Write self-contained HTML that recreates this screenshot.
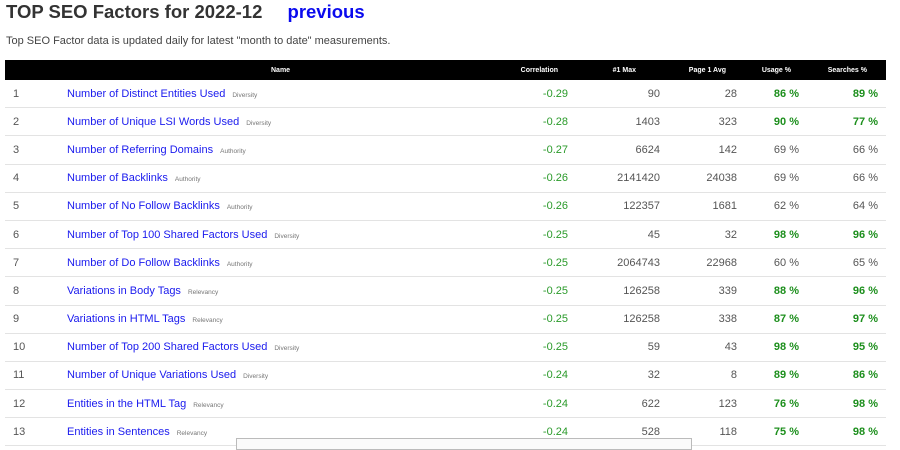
<!DOCTYPE html>
<html><head><meta charset="utf-8"><style>
body{margin:0;background:#fff;font-family:"Liberation Sans",Arial,sans-serif;width:900px;height:443px;overflow:hidden;position:relative}
h1{position:absolute;left:6px;top:0;margin:0;font-size:18.5px;line-height:23px;color:#333;font-weight:bold}
h1 a{color:#0a0aee;text-decoration:none;margin-left:20px}
p{position:absolute;left:6px;top:35px;margin:0;font-size:11px;color:#444}
table{position:absolute;left:5px;top:60px;width:881px;border-collapse:collapse;table-layout:fixed}
th{background:#000;color:#fff;font-size:7px;height:20px;padding:0;text-align:right}
td{height:27.2px;padding:0;border-bottom:1px solid #e3e3e3;font-size:11px;color:#555;text-align:right}
td.n{text-align:left;padding-left:8px}
td.nm{text-align:left;padding-left:5px}
td.nm a{color:#1a1aee;text-decoration:none;font-size:11px}
td.nm small{font-size:6.5px;color:#777;margin-left:7px}
.c{color:#2a9a2a}.g{color:#1d8f1d;font-weight:bold}
</style></head><body>
<h1>TOP SEO Factors for 2022-12 <a>previous</a></h1>
<p>Top SEO Factor data is updated daily for latest "month to date" measurements.</p>
<table>
<colgroup><col style="width:57px"><col style="width:418px"><col style="width:95px"><col style="width:91px"><col style="width:77px"><col style="width:62px"><col style="width:81px"></colgroup>
<tr><th></th><th style="text-align:left;padding-left:209px">Name</th><th style="padding-right:17px">Correlation</th><th style="padding-right:30px">#1 Max</th><th style="padding-right:17px">Page 1 Avg</th><th style="padding-right:14px">Usage %</th><th style="padding-right:19px">Searches %</th></tr>
<tbody id="b"></tbody>
</table>
<div style="position:absolute;left:236px;top:438px;width:454px;height:10px;border:1px solid #bbb;background:#fafafa"></div>
<script>
var d=[
[1,"Number of Distinct Entities Used","Diversity","-0.29","90","28","86 %","89 %",1,1],
[2,"Number of Unique LSI Words Used","Diversity","-0.28","1403","323","90 %","77 %",1,1],
[3,"Number of Referring Domains","Authority","-0.27","6624","142","69 %","66 %",0,0],
[4,"Number of Backlinks","Authority","-0.26","2141420","24038","69 %","66 %",0,0],
[5,"Number of No Follow Backlinks","Authority","-0.26","122357","1681","62 %","64 %",0,0],
[6,"Number of Top 100 Shared Factors Used","Diversity","-0.25","45","32","98 %","96 %",1,1],
[7,"Number of Do Follow Backlinks","Authority","-0.25","2064743","22968","60 %","65 %",0,0],
[8,"Variations in Body Tags","Relevancy","-0.25","126258","339","88 %","96 %",1,1],
[9,"Variations in HTML Tags","Relevancy","-0.25","126258","338","87 %","97 %",1,1],
[10,"Number of Top 200 Shared Factors Used","Diversity","-0.25","59","43","98 %","95 %",1,1],
[11,"Number of Unique Variations Used","Diversity","-0.24","32","8","89 %","86 %",1,1],
[12,"Entities in the HTML Tag","Relevancy","-0.24","622","123","76 %","98 %",1,1],
[13,"Entities in Sentences","Relevancy","-0.24","528","118","75 %","98 %",1,1]];
var h="";d.forEach(function(r){h+='<tr><td class="n">'+r[0]+'</td><td class="nm"><a>'+r[1]+'</a><small>'+r[2]+'</small></td><td class="c" style="padding-right:7px">'+r[3]+'</td><td style="padding-right:6px">'+r[4]+'</td><td style="padding-right:6px">'+r[5]+'</td><td style="padding-right:6px" class="'+(r[8]?'g':'')+'">'+r[6]+'</td><td style="padding-right:8px" class="'+(r[9]?'g':'')+'">'+r[7]+'</td></tr>'});
document.getElementById("b").innerHTML=h;
</script>
</body></html>
